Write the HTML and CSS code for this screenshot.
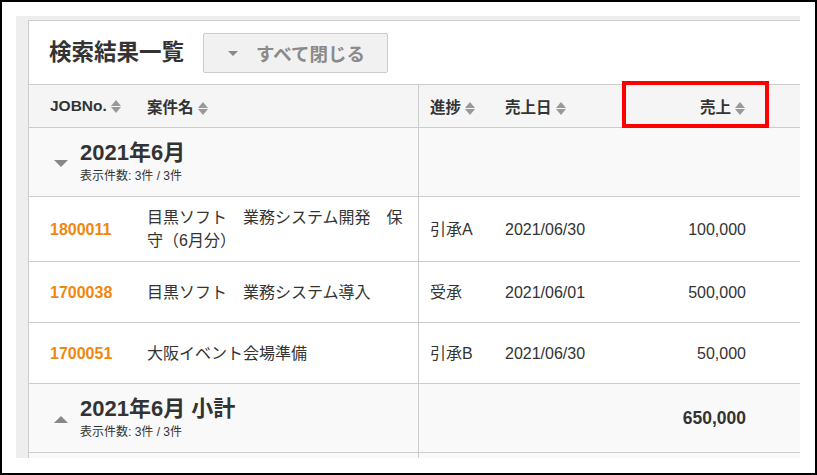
FILE: index.html
```html
<!DOCTYPE html>
<html lang="ja">
<head>
    <meta charset="UTF-8">
    <title>検索結果一覧</title>
    <link rel="stylesheet" href="styles.css">
</head>
<body>
<div class="frame">
    <div class="viewport">
        <div class="panel">
            <div class="panel-head">
                <h2 class="panel-title">検索結果一覧</h2>
                <button class="toggle-all"><span class="caret"></span>すべて閉じる</button>
            </div>

            <table class="result">
                <colgroup>
                    <col class="c-job"><col class="c-name"><col class="c-status"><col class="c-date"><col class="c-sales"><col class="c-rest">
                </colgroup>
                <thead>
                    <tr>
                        <th class="col-job">JOBNo.<span class="sort"></span></th>
                        <th class="col-name sep">案件名<span class="sort"></span></th>
                        <th class="col-status">進捗<span class="sort"></span></th>
                        <th class="col-date">売上日<span class="sort"></span></th>
                        <th class="col-sales num">売上<span class="sort"></span></th>
                        <th></th>
                    </tr>
                </thead>
                <tbody>
                    <tr class="group">
                        <td colspan="2" class="sep">
                            <div class="group-label">
                                <span class="tri down"></span>
                                <div>
                                    <div class="group-title">2021年6月</div>
                                    <div class="group-count">表示件数: 3件 / 3件</div>
                                </div>
                            </div>
                        </td>
                        <td></td><td></td><td></td><td></td>
                    </tr>
                    <tr>
                        <td class="col-job job">1800011</td>
                        <td class="col-name sep">目黒ソフト　業務システム開発　保守（6月分）</td>
                        <td class="col-status">引承A</td>
                        <td class="col-date">2021/06/30</td>
                        <td class="col-sales num">100,000</td>
                        <td></td>
                    </tr>
                    <tr>
                        <td class="col-job job">1700038</td>
                        <td class="col-name sep">目黒ソフト　業務システム導入</td>
                        <td class="col-status">受承</td>
                        <td class="col-date">2021/06/01</td>
                        <td class="col-sales num">500,000</td>
                        <td></td>
                    </tr>
                    <tr>
                        <td class="col-job job">1700051</td>
                        <td class="col-name sep">大阪イベント会場準備</td>
                        <td class="col-status">引承B</td>
                        <td class="col-date">2021/06/30</td>
                        <td class="col-sales num">50,000</td>
                        <td></td>
                    </tr>
                    <tr class="group">
                        <td colspan="2" class="sep">
                            <div class="group-label">
                                <span class="tri up"></span>
                                <div>
                                    <div class="group-title">2021年6月 小計</div>
                                    <div class="group-count">表示件数: 3件 / 3件</div>
                                </div>
                            </div>
                        </td>
                        <td></td><td></td>
                        <td class="col-sales num total">650,000</td>
                        <td></td>
                    </tr>
                    <tr class="group next">
                        <td colspan="2" class="sep"></td>
                        <td></td><td></td><td></td><td></td>
                    </tr>
                </tbody>
            </table>
        </div>
    </div>

    <!-- 注目枠 -->
    <div class="highlight"></div>
</div>
</body>
</html>
```

FILE: styles.css
```css
/* Basis */
body {
    margin: 0;
    font-family: "Liberation Sans", "Noto Sans CJK JP", sans-serif;
    color: #333;
}

.frame {
    position: relative;
    box-sizing: border-box;
    width: 817px;
    height: 475px;
    border: 2px solid #000;
    background: #fff;
    padding: 14px 0 0 14px;
}

.viewport {
    width: 784px;
    height: 442px;
    box-sizing: border-box;
    background: #eee;
    padding: 4px 0 0 12px;
    overflow: hidden;
}

.panel {
    width: 1000px;
    background: #fff;
    border: 1px solid #ccc;
}

/* Kopfzeile */
.panel-head {
    display: flex;
    align-items: center;
    height: 63px;
    padding-left: 20px;
}

.panel-title {
    margin: 0 19px 0 0;
    font-size: 22.5px;
    font-weight: bold;
    line-height: 26px;
}

.toggle-all {
    display: flex;
    align-items: center;
    box-sizing: border-box;
    width: 185px;
    height: 40px;
    margin-top: 1px;
    padding: 0 0 0 24px;
    background: #f1f1f1;
    border: 1px solid #ccc;
    border-radius: 2px;
    font-family: inherit;
    font-size: 18.5px;
    font-weight: bold;
    color: #8a8a8a;
}

.caret {
    width: 0;
    height: 0;
    border-left: 5px solid transparent;
    border-right: 5px solid transparent;
    border-top: 5px solid #888;
    margin-right: 18px;
}

/* Tabelle */
.result {
    border-collapse: separate;
    border-spacing: 0;
    table-layout: fixed;
    width: 1000px;
    font-size: 16px;
}

.c-job { width: 118px; }
.c-name { width: 272px; }
.c-status { width: 86px; }
.c-date { width: 117px; }
.c-sales { width: 146px; }

.result th, .result td {
    padding: 0;
    text-align: left;
    vertical-align: middle;
    border-bottom: 1px solid #ccc;
}

.result th {
    height: 42px;
    border-top: 1px solid #ccc;
    background: #f5f5f5;
    font-size: 15.5px;
    font-weight: bold;
    white-space: nowrap;
}

.result td {
    height: 42px;
    padding: 9px 0;
    line-height: 23px;
}

.sep { border-right: 1px solid #ccc; }

.col-job { padding-left: 21px !important; }
.col-name { padding-right: 9px !important; }
.col-status { padding-left: 11px !important; }
.result .num { text-align: right; padding-right: 22px !important; }

.job {
    color: #f0870f;
    font-weight: bold;
}

/* Sortier-Symbol */
.sort {
    display: inline-block;
    position: relative;
    width: 11px;
    height: 13px;
    margin-left: 4px;
    vertical-align: -2px;
}

.sort::before, .sort::after {
    content: "";
    position: absolute;
    left: 0;
    border-left: 5.5px solid transparent;
    border-right: 5.5px solid transparent;
}

.sort::before { top: 0; border-bottom: 6px solid #999; }
.sort::after { bottom: 0; border-top: 6px solid #999; }

/* Gruppen */
.group td {
    background: #f9f9f9;
    height: 50px;
}

.group-label {
    display: flex;
    align-items: center;
    padding-left: 25px;
}

.group-title {
    font-size: 22px;
    font-weight: bold;
    line-height: 27px;
}

.group-count {
    font-size: 12px;
    line-height: 17px;
    margin-top: 2px;
}

.tri {
    width: 0;
    height: 0;
    border-left: 7px solid transparent;
    border-right: 7px solid transparent;
    margin-right: 12px;
}

.tri.down { border-top: 7px solid #888; margin-top: 3px; }
.tri.up { border-bottom: 7px solid #888; margin-top: 2px; }

.total {
    font-size: 17.5px;
    font-weight: bold;
}

.result .next td {
    height: 20px;
    padding: 0;
}

/* Markierung */
.highlight {
    position: absolute;
    left: 620px;
    top: 79px;
    width: 139px;
    height: 39px;
    border: 4px solid #f00;
}
```
